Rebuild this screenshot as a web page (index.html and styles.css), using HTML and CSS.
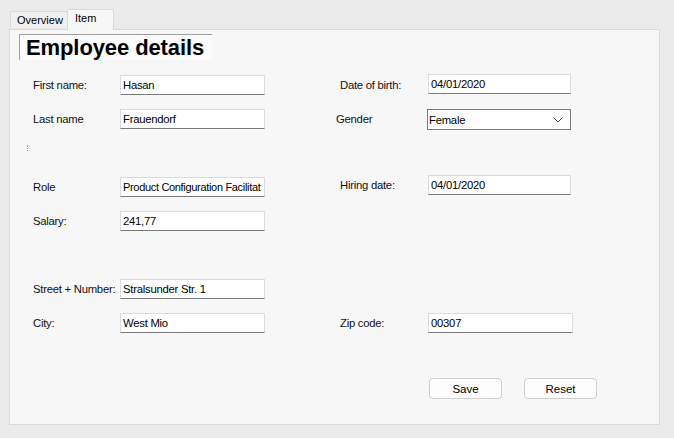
FILE: index.html
```html
<!DOCTYPE html>
<html>
<head>
<meta charset="utf-8">
<link rel="stylesheet" href="styles.css">
</head>
<body>
<div class="window">
  <div class="tabs">
    <div class="tab">Overview</div>
    <div class="tab active">Item</div>
  </div>
  <div class="panel">
    <div class="header">Employee details</div>
    <div class="form">
      <div class="label">First name:</div>
      <div class="box">Hasan</div>
      <div class="gap"></div>
      <div class="label">Date of birth:</div>
      <div class="box up1">04/01/2020</div>

      <div class="label">Last name</div>
      <div class="box">Frauendorf</div>
      <div class="gap"></div>
      <div class="label shift">Gender</div>
      <div class="combo">
        <span>Female</span>
        <svg class="chev" width="10" height="6" viewBox="0 0 10 6"><path d="M0.5 0.5 L5 5 L9.5 0.5" fill="none" stroke="#444" stroke-width="1"/></svg>
      </div>

      <div class="spacer"><span class="dots"></span></div>

      <div class="label">Role</div>
      <div class="box tight">Product Configuration Facilitat</div>
      <div class="gap"></div>
      <div class="label up2">Hiring date:</div>
      <div class="box up2">04/01/2020</div>

      <div class="label">Salary:</div>
      <div class="box">241,77</div>
      <div class="gap"></div>
      <div class="empty"></div>
      <div class="empty"></div>

      <div class="spacer"></div>

      <div class="label">Street + Number:</div>
      <div class="box">Stralsunder Str. 1</div>
      <div class="gap"></div>
      <div class="empty"></div>
      <div class="empty"></div>

      <div class="label">City:</div>
      <div class="box">West Mio</div>
      <div class="gap"></div>
      <div class="label">Zip code:</div>
      <div class="box wide">00307</div>
    </div>
    <div class="buttons">
      <button class="btn">Save</button>
      <button class="btn">Reset</button>
    </div>
  </div>
</div>
</body>
</html>
```

FILE: styles.css
```css
html, body {
  margin: 0;
  padding: 0;
}
body {
  width: 674px;
  height: 438px;
  background: #ebebeb;
  font-family: "Liberation Sans", Arial, sans-serif;
  color: #000;
  overflow: hidden;
}
.window {
  padding-top: 9px;
  padding-left: 9px;
}
.tabs {
  display: flex;
  align-items: flex-end;
  height: 20px;
  padding-left: 1px;
  position: relative;
  z-index: 2;
}
.tab {
  font-size: 11px;
  height: 16px;
  line-height: 16px;
  padding: 0 5px 0 6px;
  width: 45px;
  background: #f0f0f0;
  border: 1px solid #dadada;
  border-bottom: none;
  margin-bottom: 1px;
}
.tab.active {
  width: 33px;
  height: 20px;
  line-height: 16px;
  padding: 0 5px 0 7px;
  background: #f7f7f7;
  border-color: #dadada;
  border-left: none;
  margin-bottom: -1px;
}
.panel {
  width: 649px;
  height: 394px;
  background: #f7f7f7;
  border: 1px solid #dadada;
  position: relative;
  z-index: 1;
}
.header {
  margin: 4px 0 0 9px;
  width: 186px;
  height: 25px;
  padding-left: 6px;
  background: #fbfbfb;
  border-top: 1px solid #a0a0a0;
  border-left: 1px solid #a0a0a0;
  font-weight: bold;
  font-size: 22px;
  line-height: 26px;
  letter-spacing: -0.1px;
}
.form {
  margin-top: 15px;
  margin-left: 23px;
  display: grid;
  grid-template-columns: 87px 145px 75px 88px 143px;
  grid-template-rows: repeat(8, 20px);
  row-gap: 14px;
  font-size: 11.3px;
  letter-spacing: -0.25px;
}
.label {
  display: flex;
  align-items: center;
  height: 20px;
  color: #111;
}
.label.shift {
  margin-left: -4px;
}
.box {
  box-sizing: border-box;
  height: 20px;
  background: #fff;
  border: 1px solid #dcdcdc;
  border-bottom-color: #7a7a7a;
  padding-left: 2px;
  line-height: 18px;
  white-space: nowrap;
  overflow: hidden;
}
.box.tight {
  font-size: 11px;
  letter-spacing: -0.32px;
}
.box.wide {
  width: 145px;
}
.up1 {
  margin-top: -1px;
}
.up2 {
  margin-top: -2px;
}
.combo {
  box-sizing: border-box;
  height: 21px;
  margin-left: -1px;
  background: #fff;
  border: 1px solid #7a7a7a;
  padding-left: 1px;
  display: flex;
  align-items: center;
  justify-content: space-between;
}
.chev {
  margin-right: 7px;
}
.spacer {
  grid-column: 1 / -1;
  position: relative;
}
.dots {
  position: absolute;
  left: -6px;
  top: 2px;
  width: 1px;
  height: 6px;
  border-left: 1px dotted #9a9a9a;
}
.buttons {
  display: flex;
  gap: 22px;
  margin-top: 45px;
  padding-left: 419px;
}
.btn {
  box-sizing: border-box;
  width: 73px;
  height: 21px;
  border: 1px solid #cfcfcf;
  border-radius: 4px;
  background: #fdfdfd;
  font-family: "Liberation Sans", Arial, sans-serif;
  font-size: 11.5px;
  color: #000;
  padding: 0;
}
```
